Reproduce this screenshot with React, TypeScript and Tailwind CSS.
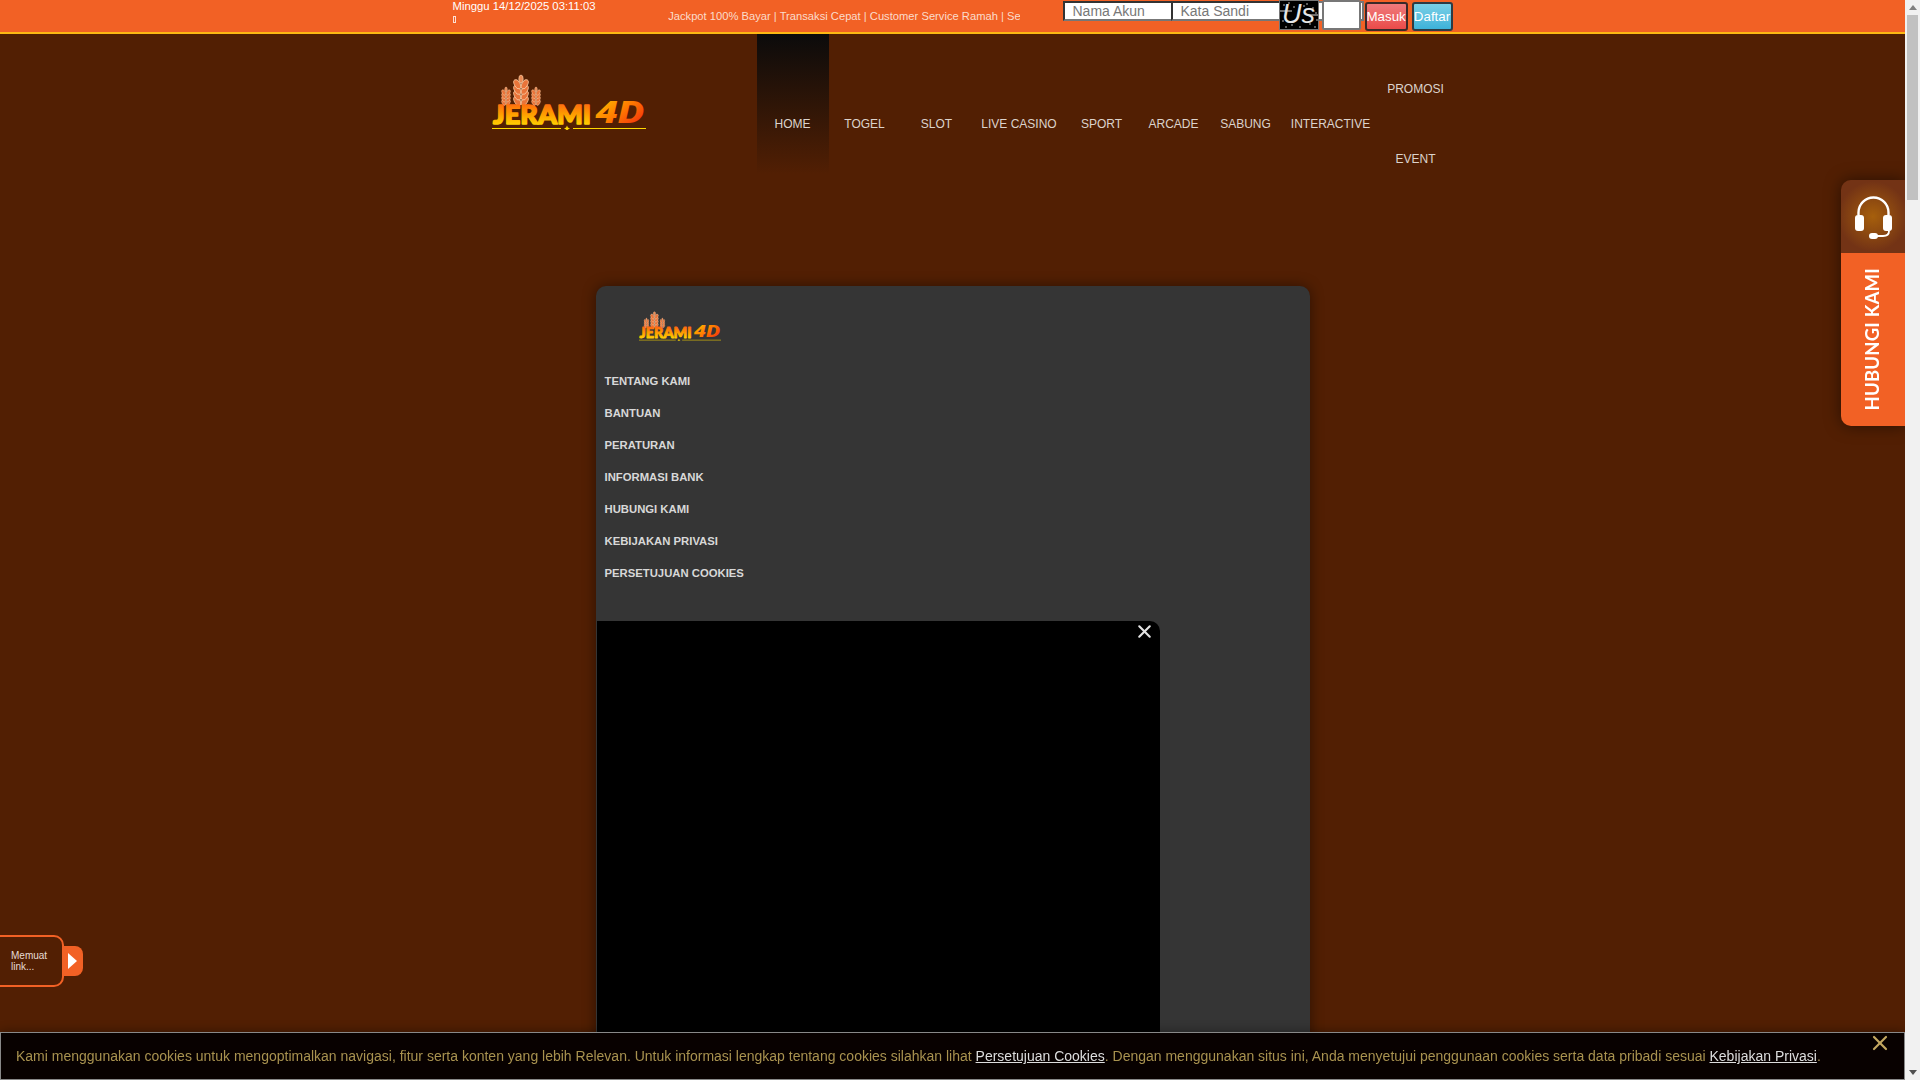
import { X } from "lucide-react";

const navItems = [
  { label: "HOME", w: "w-[72px]", active: true },
  { label: "TOGEL", w: "w-[72px]" },
  { label: "SLOT", w: "w-[72px]" },
  { label: "LIVE CASINO", w: "w-[93px]" },
  { label: "SPORT", w: "w-[72px]" },
  { label: "ARCADE", w: "w-[72px]" },
  { label: "SABUNG", w: "w-[72px]" },
  { label: "INTERACTIVE", w: "w-[98px]" },
];

const footerLinks = [
  "TENTANG KAMI",
  "BANTUAN",
  "PERATURAN",
  "INFORMASI BANK",
  "HUBUNGI KAMI",
  "KEBIJAKAN PRIVASI",
  "PERSETUJUAN COOKIES",
];

const captchaDots = [
  [4, 4], [9, 2], [14, 6], [27, 3], [33, 7], [36, 12], [3, 20], [6, 26], [12, 24], [20, 26], [30, 23], [35, 26], [24, 5], [37, 19],
];

function Wheat({ x, base, scale }: { x: number; base: number; scale: number }) {
  const rows = [0, 1, 2, 3];
  return (
    <g transform={`translate(${x} ${base}) scale(${scale})`}>
      <path d="M0 0V-27" stroke="#fbd0a8" strokeWidth="0.8" />
      <ellipse cx="0" cy="-26" rx="2.2" ry="4" fill="#e98a55" stroke="#fbd0a8" strokeWidth="0.6" />
      {rows.map((r) => (
        <g key={r}>
          <ellipse cx="-3.8" cy={-4 - r * 5.6} rx="2.8" ry="5" transform={`rotate(-28 -3.8 ${-4 - r * 5.6})`} fill="#e9743a" stroke="#fbd0a8" strokeWidth="0.7" />
          <ellipse cx="3.8" cy={-4 - r * 5.6} rx="2.8" ry="5" transform={`rotate(28 3.8 ${-4 - r * 5.6})`} fill="#e9743a" stroke="#fbd0a8" strokeWidth="0.7" />
        </g>
      ))}
    </g>
  );
}

function Logo({ id, className }: { id: string; className: string }) {
  return (
    <svg viewBox="0 0 154 58" className={className}>
      <defs>
        <linearGradient id={`${id}-a`} x1="0" y1="0" x2="0" y2="1">
          <stop offset="0" stopColor="#fb4a1c" />
          <stop offset="0.5" stopColor="#ff9a00" />
          <stop offset="1" stopColor="#ffe800" />
        </linearGradient>
        <linearGradient id={`${id}-b`} x1="0" y1="0" x2="1" y2="1">
          <stop offset="0" stopColor="#ffd000" />
          <stop offset="0.5" stopColor="#ff7a00" />
          <stop offset="1" stopColor="#ee1a10" />
        </linearGradient>
      </defs>
      <Wheat x={14} base={33} scale={0.6} />
      <Wheat x={29} base={33} scale={1} />
      <Wheat x={44} base={33} scale={0.6} />
      <text
        x="1"
        y="52"
        textLength="98"
        lengthAdjust="spacingAndGlyphs"
        fontFamily="Lato, sans-serif"
        fontWeight="900"
        fontSize="27"
        fill={`url(#${id}-a)`}
        stroke={`url(#${id}-a)`}
        strokeWidth="1.6"
        strokeLinejoin="round"
      >
        JERAMI
      </text>
      <text
        x="103"
        y="51"
        textLength="49"
        lengthAdjust="spacingAndGlyphs"
        fontFamily="Roboto, sans-serif"
        fontWeight="900"
        fontStyle="italic"
        fontSize="32"
        fill={`url(#${id}-b)`}
      >
        4D
      </text>
      <path d="M0 56.5H69M81 56.5H154" stroke="#ffd900" strokeWidth="1" />
      <path d="M75 53.5l.9 2.1 2.1.9-2.1.9-.9 2.1-.9-2.1-2.1-.9 2.1-.9z" fill="#ffd900" />
    </svg>
  );
}

function Field({ placeholder }: { placeholder: string }) {
  return (
    <input
      placeholder={placeholder}
      className="w-[108px] h-[20px] bg-white pl-2 text-sm border-2 border-r-0 border-t-[#333] border-l-[#333] border-b-[#777] placeholder:text-[#777] outline-none"
    />
  );
}

function Headset() {
  return (
    <svg width="37" height="44" viewBox="0 0 37 44" fill="none">
      <path d="M3.5 20V17.5a15 15 0 0 1 30 0V20" stroke="#fff" strokeWidth="2.4" />
      <rect x="0" y="20" width="9" height="16" rx="3" fill="#fff" />
      <rect x="28" y="20" width="9" height="16" rx="3" fill="#fff" />
      <path d="M34 36c0 3-2 5-6 5h-6" stroke="#fff" strokeWidth="1.8" />
      <rect x="14" y="38" width="9" height="6" rx="3" fill="#fff" />
    </svg>
  );
}

export default function App() {
  return (
    <div className="w-[1905px] min-h-screen bg-[#521f03] font-['Liberation_Sans',Arial,sans-serif]">
      {/* top bar */}
      <div className="h-[34px] bg-[#f26125] border-b-2 border-[#fdb813]">
        <div className="w-[1000px] mx-auto flex items-start text-[11.3px] text-white">
          <div className="w-[216px] leading-[13px]">
            <div>Minggu 14/12/2025 03:11:03</div>
            <span className="inline-block w-[3px] h-[7px] border border-white/80"></span>
          </div>
          <div className="w-[352px] h-[32px] overflow-hidden whitespace-nowrap leading-[32px] text-[#fbdccb] text-[11.2px]">
            Jackpot 100% Bayar | Transaksi Cepat | Customer Service Ramah | Se
          </div>
          <div className="ml-[43px] flex items-start">
            <div className="pt-px flex">
              <Field placeholder="Nama Akun" />
              <Field placeholder="Kata Sandi" />
            </div>
            <div className="relative w-[85px] h-[32px]">
              <div className="absolute left-0 top-px w-[85px] h-[20px] bg-white border-2 border-[#777] border-l-0"></div>
              <div className="absolute left-0 top-0 w-[40px] h-[30px] bg-black border border-[#777] text-[#e6e6e6] text-[27px] leading-[26px] text-center italic font-['Liberation_Sans',sans-serif] overflow-hidden">
                Us
                <svg viewBox="0 0 38 28" className="absolute inset-0 w-full h-full">
                  <path d="M0 10H12M28 14H38" stroke="#ddd" strokeWidth="1" />
                  {captchaDots.map(([cx, cy]) => (
                    <circle key={`${cx}-${cy}`} cx={cx} cy={cy} r="0.7" fill="#fff" />
                  ))}
                </svg>
              </div>
              <div className="absolute left-[43px] top-0 w-[39px] h-[30px] bg-white border-2 border-[#777] rounded-[2px]"></div>
            </div>
            <button className="mt-[2px] ml-px w-[43px] h-[29px] rounded-[3px] border-2 border-[#3a2a28] bg-linear-to-b from-[#ef7a7c] to-[#ea4a49] text-[13.33px] text-white p-0">
              Masuk
            </button>
            <button className="mt-[2px] ml-[4px] w-[41px] h-[29px] rounded-[3px] border-2 border-[#2d3b44] bg-linear-to-b from-[#79d0e6] to-[#3cb2da] text-[13.33px] text-white p-0">
              Daftar
            </button>
          </div>
        </div>
      </div>

      <div className="w-[1000px] mx-auto">
        {/* header */}
        <div className="flex h-[180px]">
          <div className="w-[304px] pl-[39px] pt-[38px]">
            <Logo id="main" className="w-[154px] h-[58px]" />
          </div>
          <nav className="flex text-xs text-[#dcd3cc]">
            {navItems.map((item) => (
              <a
                key={item.label}
                className={`${item.w} h-[180px] flex items-center justify-center ${
                  item.active ? "bg-linear-to-b from-[#0b0b0b] to-transparent to-[78%]" : ""
                }`}
              >
                {item.label}
              </a>
            ))}
            <div className="w-[72px] h-[180px] flex flex-col items-center justify-center">
              <a className="h-[70px] flex items-center">PROMOSI</a>
              <a className="h-[70px] flex items-center">EVENT</a>
            </div>
          </nav>
        </div>

        {/* footer card */}
        <div className="mt-[72px] ml-[143px] w-[714px] rounded-t-[10px] bg-[#353535] shadow-[0_0_14px_rgba(0,0,0,0.45)]">
          <div className="pt-[24px] pl-[43px]">
            <Logo id="small" className="w-[82px] h-[31px]" />
          </div>
          <ul className="mt-[24px] pl-[9px] text-[11.3px] font-bold text-[#d8d8d8]">
            {footerLinks.map((link) => (
              <li key={link} className="h-[32px] leading-[32px]">
                {link}
              </li>
            ))}
          </ul>
          <div className="relative mt-[32px] ml-px w-[563px] h-[5580px] bg-black rounded-tr-[10px]">
            <X className="absolute right-[5px] top-0 size-[21px] text-[#e4e4e4]" strokeWidth={2.4} />
          </div>
        </div>
      </div>

      {/* contact widget */}
      <div className="fixed right-[15px] top-[180px] w-[64px] rounded-l-[10px] overflow-hidden shadow-[0_0_16px_rgba(0,0,0,0.5)]">
        <div className="h-[73px] flex items-center justify-center bg-[radial-gradient(circle,#a65f0c_0%,#733315_72%)]">
          <Headset />
        </div>
        <div className="h-[173px] bg-[#f26125] flex items-center justify-center">
          <span className="[writing-mode:vertical-rl] rotate-180 text-white font-['Lato',sans-serif] font-bold text-[18.5px] tracking-[0.2px]">
            HUBUNGI KAMI
          </span>
        </div>
      </div>

      {/* left link widget */}
      <div className="fixed left-0 top-[935px] flex items-center">
        <div className="w-[66px] h-[52px] -ml-[2px] pl-[11px] pt-[13px] border-2 border-[#f26125] rounded-r-[10px] bg-[#521f03] text-[10px] leading-[11px] text-[#e6dcd4]">
          Memuat link...
        </div>
        <div className="w-[20px] h-[30px] -ml-px bg-[#f26125] rounded-r-[8px] flex items-center pl-[5px]">
          <div className="size-0 border-y-[8px] border-y-transparent border-l-[9px] border-l-white"></div>
        </div>
      </div>

      {/* cookie notice */}
      <div className="fixed left-0 right-[15px] bottom-0 h-[48px] bg-[#080100] border border-[#888] shadow-[0_0_10px_rgba(0,0,0,0.4)] flex items-center pl-[15px] text-sm text-[#a8924f] whitespace-nowrap">
        <span>
          Kami menggunakan cookies untuk mengoptimalkan navigasi, fitur serta konten yang lebih Relevan. Untuk informasi lengkap tentang cookies silahkan lihat{" "}
          <a className="text-[#ddd] underline">Persetujuan Cookies</a>. Dengan menggunakan situs ini, Anda menyetujui penggunaan cookies serta data pribadi sesuai{" "}
          <a className="text-[#ddd] underline">Kebijakan Privasi</a>.
        </span>
        <X className="absolute right-[12px] -top-[2px] size-[24px] text-[#c4a860]" strokeWidth={2.2} />
      </div>

      {/* page scrollbar */}
      <div className="fixed right-0 top-0 bottom-0 w-[15px] bg-[#f1f1f1] flex flex-col items-center">
        <div className="mt-[5px] size-0 border-x-[4px] border-x-transparent border-b-[5px] border-b-[#808080]"></div>
        <div className="mt-[5px] w-[11px] h-[185px] bg-[#c1c1c1]"></div>
        <div className="mt-auto mb-[5px] size-0 border-x-[4px] border-x-transparent border-t-[5px] border-t-[#505050]"></div>
      </div>
    </div>
  );
}
